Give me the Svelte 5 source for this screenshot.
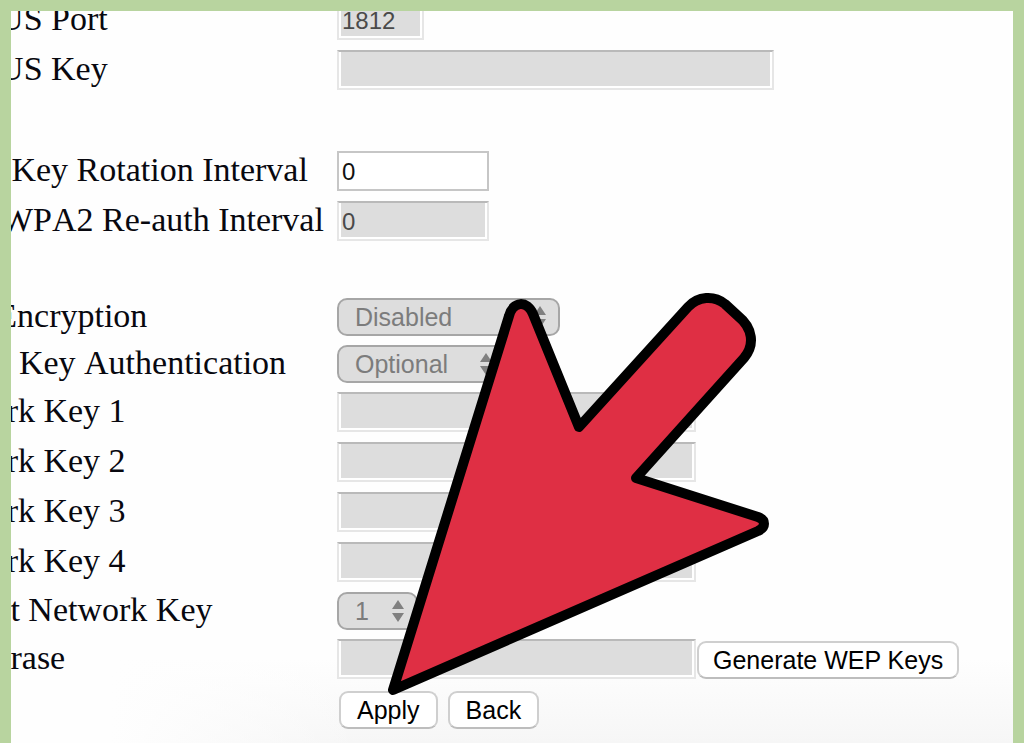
<script lang="ts">
    type Row = {
        id: string;
        label: string;
        kind: 'text' | 'select';
        size: string;
        value: string;
        disabled?: boolean;
        action?: string;
    };

    // Each group is separated by an empty line in the form
    const groups: Row[][] = [
        [
            { id: 'radius-port', label: 'RADIUS Port', kind: 'text', size: 'port', value: '1812', disabled: true },
            { id: 'radius-key', label: 'RADIUS Key', kind: 'text', size: 'long', value: '', disabled: true }
        ],
        [
            { id: 'rotation', label: 'Group Key Rotation Interval', kind: 'text', size: 'short', value: '0' },
            { id: 'reauth', label: 'WPA/WPA2 Re-auth Interval', kind: 'text', size: 'short', value: '0', disabled: true }
        ],
        [
            { id: 'wep', label: 'WEP Encryption', kind: 'select', size: 'wide', value: 'Disabled', disabled: true },
            { id: 'shared', label: 'Shared Key Authentication', kind: 'select', size: 'medium', value: 'Optional', disabled: true },
            { id: 'key1', label: 'Network Key 1', kind: 'text', size: 'key', value: '', disabled: true },
            { id: 'key2', label: 'Network Key 2', kind: 'text', size: 'key', value: '', disabled: true },
            { id: 'key3', label: 'Network Key 3', kind: 'text', size: 'key', value: '', disabled: true },
            { id: 'key4', label: 'Network Key 4', kind: 'text', size: 'key', value: '', disabled: true },
            { id: 'current', label: 'Current Network Key', kind: 'select', size: 'narrow', value: '1', disabled: true },
            { id: 'passphrase', label: 'Passphrase', kind: 'text', size: 'key', value: '', disabled: true, action: 'Generate WEP Keys' }
        ]
    ];
</script>

<div class="page">
    <main class="panel">
        <form class="form" onsubmit={(e) => e.preventDefault()}>
            {#each groups as rows}
                <div class="group">
                    {#each rows as row (row.id)}
                        <div class="row {row.kind}">
                            <label for={row.id}>{row.label}</label>
                            {#if row.kind === 'text'}
                                <input id={row.id} class={row.size} type="text" value={row.value} disabled={row.disabled} />
                            {:else}
                                <div class="dropdown {row.size}">
                                    <select id={row.id} disabled={row.disabled}>
                                        <option>{row.value}</option>
                                    </select>
                                    <svg class="arrows" viewBox="0 0 12 22" aria-hidden="true">
                                        <path d="M6 0 L12 9 H0 Z M0 13 H12 L6 22 Z" />
                                    </svg>
                                </div>
                            {/if}
                            {#if row.action}
                                <button type="button">{row.action}</button>
                            {/if}
                        </div>
                    {/each}
                </div>
            {/each}
            <div class="buttons">
                <button type="submit">Apply</button>
                <button type="button">Back</button>
            </div>
        </form>
    </main>

    <!-- Pointer to the Apply button -->
    <svg class="pointer" viewBox="380 290 395 410" aria-hidden="true">
        <path
            d="M393 690 L509 316 C513 301 527 300 533 314 L579 427 L688 307
               C698 296 714 295 725 304 L738 316 C753 328 755 345 744 358
               L636 478 L758 517 C766 520 766 527 758 531 Z"
        />
    </svg>
</div>

<style>
    :global(body) {
        margin: 0;
    }

    .page {
        position: relative;
        box-sizing: border-box;
        min-height: 100vh;
        padding: 11px 11px 0;
        background: #b8d49f;
        display: flex;
        overflow: hidden;
    }

    .panel {
        flex: 1;
        min-width: 0;
        overflow: hidden;
        background:
            linear-gradient(to right, #fefefe 10%, transparent 35%) bottom / 100% 84px no-repeat,
            linear-gradient(to bottom, #fefefe, #f6f6f6) bottom / 100% 84px no-repeat,
            #fefefe;
    }

    /* The form is scrolled past its top left corner */
    .form {
        margin: -16px 0 0 -95px;
    }

    .group {
        margin-bottom: 51px;
    }

    .group:nth-of-type(2) {
        margin-bottom: 47px;
    }

    .group:nth-of-type(3) {
        margin-bottom: 0;
    }

    .row {
        display: flex;
        align-items: center;
        height: 50px;
    }

    .row.select {
        height: 47px;
    }

    label {
        flex: 0 0 421px;
        padding-bottom: 2px;
        font-family: "Liberation Serif", "Times New Roman", serif;
        font-size: 34px;
        line-height: 40px;
        font-kerning: none;
        white-space: nowrap;
        color: #08080f;
    }

    input,
    select,
    button {
        box-sizing: border-box;
        margin: 0;
        font-family: "Liberation Sans", Helvetica, Arial, sans-serif;
    }

    input {
        height: 40px;
        padding: 2px 2px 0 3px;
        border: 2px solid #c6c6c6;
        border-radius: 0;
        background: #fff;
        font-size: 24px;
        color: #111;
    }

    input:disabled {
        border-color: #b9b9b9 #e6e6e6 #e6e6e6;
        background: #ddd;
        box-shadow: inset 2px 0 #fff, inset -2px 0 #fff, inset 0 -2px #fff;
        color: #4a4a4a;
    }

    .port {
        width: 87px;
    }

    .long {
        width: 437px;
    }

    .short {
        width: 152px;
    }

    .key {
        width: 359px;
    }

    .dropdown {
        position: relative;
    }

    .wide {
        width: 223px;
    }

    .medium {
        width: 169px;
    }

    .narrow {
        width: 81px;
    }

    select {
        display: block;
        width: 100%;
        height: 38px;
        padding: 0 0 0 16px;
        appearance: none;
        border: 2px solid #a6a6a6;
        border-radius: 10px;
        background: #ddd;
        font-size: 25px;
        color: #7c7c7c;
        opacity: 1;
    }

    .arrows {
        position: absolute;
        top: 8px;
        right: 14px;
        width: 12px;
        height: 22px;
        fill: #808080;
    }

    button {
        height: 38px;
        padding: 0 16px;
        border: 2px solid #cfcfcf;
        border-bottom-color: #bdbdbd;
        border-radius: 9px;
        background: #fff;
        font-size: 25px;
        line-height: 34px;
        white-space: nowrap;
        color: #000;
    }

    .row button {
        margin: 2px 0 0 1px;
        padding: 0 14px;
    }

    .buttons {
        display: flex;
        gap: 10px;
        padding: 7px 0 8px 423px;
    }

    .pointer {
        position: absolute;
        left: 380px;
        top: 290px;
        width: 395px;
        height: 410px;
        pointer-events: none;
    }

    .pointer path {
        fill: #df2f44;
        stroke: #000;
        stroke-width: 10;
        stroke-linejoin: round;
    }
</style>
